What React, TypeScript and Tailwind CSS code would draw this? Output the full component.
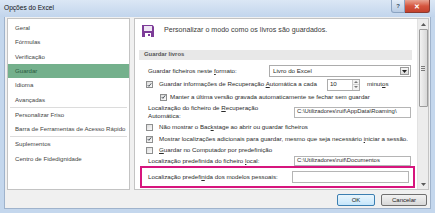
import React from "react";

const Check = ({ checked }: { checked: boolean }) => (
  <span className="w-[7px] h-[7px] border border-[#8e8f8f] bg-gradient-to-br from-[#dcdcdc] to-[#fbfbfb] flex items-center justify-center shrink-0">
    {checked && (
      <svg width="6" height="6" viewBox="0 0 6 6">
        <path d="M0.9 3.1 L2.3 4.6 L5.1 1" stroke="#404850" strokeWidth="1.1" fill="none" />
      </svg>
    )}
  </span>
);

const Floppy = () => (
  <svg width="12" height="12" viewBox="0 0 12 12">
    <path d="M0 0 H10.5 L12 1.5 V12 H0 Z" fill="#7d3c98" />
    <rect x="2" y="1" width="8" height="5" fill="#efe6f4" />
    <rect x="3" y="8" width="6" height="4" fill="#ffffff" />
    <rect x="6" y="9" width="2" height="2" fill="#7d3c98" />
  </svg>
);

const PathInput = ({ text, h = "h-[11px]" }: { text?: string; h?: string }) => (
  <div className={`ml-auto w-[117px] ${h} bg-white border border-[#b5b5b5] flex items-center pl-[2px] overflow-hidden whitespace-nowrap text-[5.9px] text-[#2e2e2e]`}>
    {text}
  </div>
);

export default function App() {
  const leftTop = ["Geral", "Fórmulas", "Verificação", "Guardar", "Idioma", "Avançadas"];
  return (
    <div className="w-[435px] h-[213px] overflow-hidden bg-[#c4d7ed] flex flex-col font-['Liberation_Sans',Arial,sans-serif] text-[#2b2b2b] text-[6.2px] leading-none">
      {/* Title bar */}
      <div className="h-[17px] shrink-0 flex items-start bg-gradient-to-b from-[#dbe7f5] to-[#c2d5ec]">
        <div className="pl-[4px] pt-[5px] text-[6.6px] text-[#111]">Opções do Excel</div>
        <div className="ml-auto mr-[5px] flex">
          <div className="w-[14px] h-[13px] border border-[#8ba3c1] border-t-0 rounded-bl-[3px] bg-gradient-to-b from-[#e4edf7] to-[#b8cbe3] flex items-center justify-center text-[6px] font-bold text-[#3d4f66]">
            ?
          </div>
          <div className="w-[25px] h-[13px] border border-[#8a3a30] border-t-0 border-l-0 rounded-br-[3px] bg-gradient-to-b from-[#e8a493] via-[#d5553f] to-[#c4412c] flex items-center justify-center text-[7px] font-bold text-white">
            ✕
          </div>
        </div>
      </div>

      {/* Body */}
      <div className="flex-1 mx-[4px] mb-[4px] bg-[#f0f0f0] border border-[#9fb3cc] border-t-0 flex flex-col">
        <div className="flex h-[172px] mt-[1px] ml-[2px] mr-[1px] gap-[4px]">
          {/* Left panel */}
          <div className="w-[123px] shrink-0 bg-white border border-[#c3c3c3] pt-[2px] text-[#444] text-[6.1px]">
            {leftTop.map((t) => (
              <div
                key={t}
                className={`h-[14.3px] flex items-center pl-[7px] ${t === "Guardar" ? "bg-[#74b08c] text-[#2c5a3f]" : ""}`}
              >
                {t}
              </div>
            ))}
            <div className="h-[1px] mx-[2px] bg-[#dcdcdc]" />
            <div className="h-[14.3px] flex items-center pl-[7px]">Personalizar Friso</div>
            <div className="h-[14.3px] flex items-center pl-[7px] whitespace-nowrap">Barra de Ferramentas de Acesso Rápido</div>
            <div className="h-[1px] mx-[2px] bg-[#dcdcdc]" />
            <div className="h-[14.3px] flex items-center pl-[7px]">Suplementos</div>
            <div className="h-[14.3px] flex items-center pl-[7px]">Centro de Fidedignidade</div>
          </div>

          {/* Right panel */}
          <div className="flex-1 bg-white border border-[#c3c3c3] flex overflow-hidden">
            <div className="flex-1 flex flex-col overflow-hidden">
              {/* heading */}
              <div className="mt-[5px] h-[14px] flex items-center pl-[7px] gap-[10px]">
                <Floppy />
                <span className="text-[7.1px] text-[#3a3a3a]">Personalizar o modo como os livros são guardados.</span>
              </div>
              {/* section band */}
              <div className="mt-[12px] h-[10px] ml-[4px] mr-[5px] bg-[#e8e8e8] flex items-center pl-[5px] font-bold text-[5.9px] text-[#555]">
                Guardar livros
              </div>
              {/* format row */}
              <div className="mt-[5px] h-[12px] flex items-center pl-[13px] pr-[6px]">
                <span>
                  Guardar ficheiros neste <u>f</u>ormato:
                </span>
                <div className="ml-auto w-[142px] h-[12px] bg-white border border-[#acacac] flex items-center pl-[3px]">
                  <span>Livro do Excel</span>
                  <div className="ml-auto mr-[1px] w-[9px] h-[8px] border border-[#9a9a9a] bg-gradient-to-b from-[#f6f6f6] to-[#dcdcdc] flex items-center justify-center">
                    <svg width="5" height="3" viewBox="0 0 5 3">
                      <path d="M0 0 H5 L2.5 3 Z" fill="#222" />
                    </svg>
                  </div>
                </div>
              </div>
              {/* cb1 */}
              <div className="mt-[1px] h-[13px] flex items-center pl-[11px] gap-[6px]">
                <Check checked />
                <span>
                  Guardar informações de Recuperação <u>A</u>utomática a cada
                </span>
                <div className="ml-[4px] w-[33px] h-[12px] bg-white border border-[#acacac] flex items-center">
                  <span className="pl-[2px]">10</span>
                  <div className="ml-auto w-[7px] h-full border-l border-[#c8c8c8] flex flex-col">
                    <div className="flex-1 flex items-center justify-center bg-[#f2f2f2] border-b border-[#d0d0d0]">
                      <svg width="4" height="2" viewBox="0 0 4 2"><path d="M0 2 H4 L2 0 Z" fill="#777" /></svg>
                    </div>
                    <div className="flex-1 flex items-center justify-center bg-[#f2f2f2]">
                      <svg width="4" height="2" viewBox="0 0 4 2"><path d="M0 0 H4 L2 2 Z" fill="#777" /></svg>
                    </div>
                  </div>
                </div>
                <span className="ml-[1px]">
                  minut<u>o</u>s
                </span>
              </div>
              {/* cb2 */}
              <div className="h-[12px] flex items-center pl-[25px] gap-[3px]">
                <Check checked />
                <span>Manter a última versão gravada automaticamente se fechar sem guardar</span>
              </div>
              {/* loc rec */}
              <div className="mt-[1px] h-[16px] flex items-center pl-[13px] pr-[6px]">
                <div className="flex flex-col">
                  <div className="h-[8px] flex items-center">
                    <span>
                      Localização do ficheiro de <u>R</u>ecuperação
                    </span>
                  </div>
                  <div className="h-[8px] flex items-center">
                    <span>Automática:</span>
                  </div>
                </div>
                <PathInput text="C:\Utilizadores\ruif\AppData\Roaming\" />
              </div>
              {/* cb3 */}
              <div className="mt-[1px] h-[12px] flex items-center pl-[11px] gap-[6px]">
                <Check checked={false} />
                <span>
                  Não mostrar o Bac<u>k</u>stage ao abrir ou guardar ficheiros
                </span>
              </div>
              {/* cb4 */}
              <div className="h-[12px] flex items-center pl-[11px] gap-[6px] whitespace-nowrap">
                <Check checked />
                <span>
                  Mostrar localizações adicionais para guardar, mesmo que seja necessário <u>i</u>niciar a sessão.
                </span>
              </div>
              {/* cb5 */}
              <div className="h-[11px] flex items-center pl-[11px] gap-[6px]">
                <Check checked={false} />
                <span>
                  <u>G</u>uardar no Computador por predefinição
                </span>
              </div>
              {/* local */}
              <div className="h-[10px] flex items-center pl-[13px] pr-[6px]">
                <span>
                  Localização predefinida do ficheiro <u>l</u>ocal:
                </span>
                <PathInput text="C:\Utilizadores\ruif\Documentos" h="h-[10px]" />
              </div>
              {/* highlighted */}
              <div className="h-[22px] ml-[5px] mr-[2px] border-2 border-[#d6157d] flex items-center pl-[6px] pr-[4px]">
                <span>
                  Localização predefi<u>n</u>ida dos modelos pessoais:
                </span>
                <PathInput h="h-[12px]" />
              </div>
            </div>
            {/* scrollbar */}
            <div className="w-[11px] shrink-0 bg-[#ececec] border-l border-[#e2e2e2] flex flex-col items-center">
              <div className="h-[10px] w-full flex items-center justify-center">
                <svg width="5" height="3" viewBox="0 0 5 3"><path d="M0 3 H5 L2.5 0 Z" fill="#5a5a5a" /></svg>
              </div>
              <div className="w-[9px] h-[78px] border border-[#9c9c9c] rounded-[1px] bg-gradient-to-r from-[#f2f2f2] to-[#d8d8d8] flex flex-col items-center justify-center gap-[1px]">
                <div className="w-[4px] h-[1px] bg-[#7a7a7a]" />
                <div className="w-[4px] h-[1px] bg-[#7a7a7a]" />
                <div className="w-[4px] h-[1px] bg-[#7a7a7a]" />
              </div>
              <div className="mt-auto h-[10px] w-full flex items-center justify-center">
                <svg width="5" height="3" viewBox="0 0 5 3"><path d="M0 0 H5 L2.5 3 Z" fill="#5a5a5a" /></svg>
              </div>
            </div>
          </div>
        </div>

        {/* buttons */}
        <div className="mt-[4px] h-[12px] flex justify-end gap-[6px] mr-[3px] text-[6px] text-[#222]">
          <div className="w-[38px] h-[12px] rounded-[2px] border border-[#3c7fb1] bg-gradient-to-b from-[#eaf6fd] to-[#c6e6fb] flex items-center justify-center">
            OK
          </div>
          <div className="w-[46px] h-[12px] rounded-[2px] border border-[#707070] bg-gradient-to-b from-[#f2f2f2] to-[#d8d8d8] flex items-center justify-center">
            Cancelar
          </div>
        </div>
      </div>
    </div>
  );
}
